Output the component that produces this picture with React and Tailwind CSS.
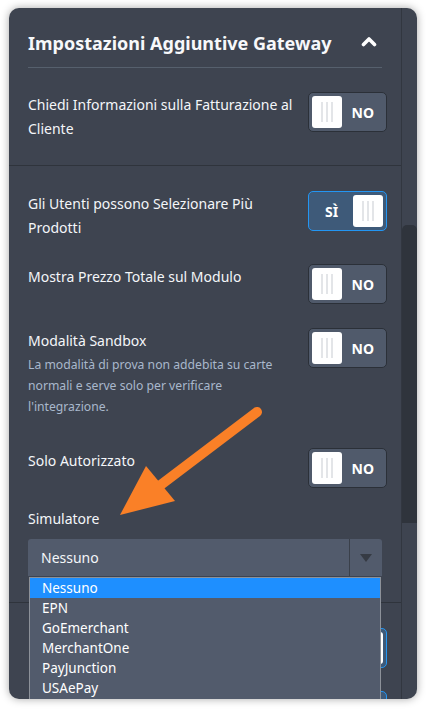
import React from 'react';

const Stripes = () => (
  <div className="flex gap-[3px]">
    <span className="w-[2px] h-[20px] bg-[#e3e5e8]" />
    <span className="w-[2px] h-[20px] bg-[#e3e5e8]" />
    <span className="w-[2px] h-[20px] bg-[#e3e5e8]" />
  </div>
);

const Toggle = ({ on }) => {
  if (on) {
    return (
      <div className="flex items-center justify-between w-[79px] h-[40px] shrink-0 rounded-[5px] border border-[#2396f3] bg-[#3e5a79] pl-[16px] pr-[3px]">
        <span className="text-[14px] font-bold text-white">SÌ</span>
        <div className="w-[30px] h-[32px] rounded-[3px] bg-white flex items-center justify-center">
          <Stripes />
        </div>
      </div>
    );
  }
  return (
    <div className="flex items-center w-[79px] h-[40px] shrink-0 rounded-[5px] border border-[#2b3038] bg-[#505a6b] pl-[3px] pr-[12px]">
      <div className="w-[30px] h-[32px] rounded-[3px] bg-white flex items-center justify-center">
        <Stripes />
      </div>
      <span className="ml-auto text-[14px] font-bold text-white">NO</span>
    </div>
  );
};

const Row = ({ label, desc, on, className }) => (
  <div className={`flex items-start justify-between gap-3 ${className || ''}`}>
    <div className="flex-1 pt-[1px]">
      <div className="text-[14px] leading-[24px] text-[#f4f6f9]">{label}</div>
      {desc && (
        <div className="text-[12.2px] leading-[21px] text-[#a9b8cc] mt-[1px] pr-[20px]">{desc}</div>
      )}
    </div>
    <Toggle on={on} />
  </div>
);

const options = ['Nessuno', 'EPN', 'GoEmerchant', 'MerchantOne', 'PayJunction', 'USAePay'];

export default function App() {
  return (
    <div
      className="relative w-[426px] h-[709px] bg-white pt-[8px] px-[9px]"
      style={{ fontFamily: '"Noto Sans", "Open Sans", sans-serif' }}
    >
      <div className="relative flex h-[691px] rounded-[10px] bg-[#3e4450] overflow-hidden shadow-[0_0_8px_rgba(0,0,0,0.35)]">
        {/* content */}
        <div className="relative flex-1 min-w-0">
          {/* header */}
          <div className="mx-[19px] pt-[22px] pb-[11px] border-b border-[#56606d] flex items-center justify-between">
            <h2 className="text-[18px] leading-[26px] font-bold text-[#f7f8fa]">Impostazioni Aggiuntive Gateway</h2>
            <svg width="16" height="12" viewBox="0 0 16 12" className="mr-[5px] mt-[-4px]">
              <polyline points="2.5,9.5 8,4 13.5,9.5" fill="none" stroke="#fff" strokeWidth="3.6" strokeLinecap="round" strokeLinejoin="round" />
            </svg>
          </div>

          <div className="pl-[19px] pr-[14px] pt-[24px] pb-[24px] border-b border-[#2f343c]">
            <Row label="Chiedi Informazioni sulla Fatturazione al Cliente" on={false} />
          </div>

          <div className="pl-[19px] pr-[14px] pt-[25px]">
            <Row label="Gli Utenti possono Selezionare Più Prodotti" on />
            <Row className="mt-[24px]" label="Mostra Prezzo Totale sul Modulo" on={false} />
            <Row
              className="mt-[24px]"
              label="Modalità Sandbox"
              desc="La modalità di prova non addebita su carte normali e serve solo per verificare l'integrazione."
              on={false}
            />
            <Row className="mt-[31px]" label="Solo Autorizzato" on={false} />

            <div className="mt-[19px] text-[14px] leading-[24px] text-[#f4f6f9]">Simulatore</div>
            <div className="relative mt-[8px] mr-[5px]">
              <div className="flex h-[37px] rounded-t-[3px] bg-[#525b6c]">
                <div className="flex-1 flex items-center pl-[13px] text-[14px] text-[#f4f6f9]">Nessuno</div>
                <div className="w-[33px] border-l border-[#3a404a] flex items-center justify-center">
                  <svg width="12" height="8" viewBox="0 0 12 8">
                    <polygon points="0,0 12,0 6,8" fill="#363b44" />
                  </svg>
                </div>
              </div>
            </div>
          </div>

          {/* content partly hidden under the dropdown */}
          <div className="mt-[26px] border-t border-[#2f343c] pl-[19px] pr-[14px] pt-[25px]">
            <div className="flex justify-end">
              <Toggle on />
            </div>
            <div className="flex justify-end mt-[23px]">
              <div className="w-[79px] h-[40px] rounded-[5px] border border-[#2396f3] bg-[#3e5a79]" />
            </div>
          </div>

          {/* open dropdown list */}
          <div className="absolute left-[20px] top-[569px] w-[352px] border border-[#8c9199] bg-[#525b6c]">
            {options.map((o, i) => (
              <div
                key={o}
                className={`h-[20px] pl-[12px] flex items-center text-[13.5px] text-white ${i === 0 ? 'bg-[#1e8fff]' : ''}`}
              >
                {o}
              </div>
            ))}
            <div className="h-[2px]" />
          </div>
        </div>

        {/* scrollbar */}
        <div className="w-[16px] shrink-0 border-l border-[#323740] relative">
          <div className="absolute left-0 right-0 top-[217px] h-[298px] rounded-t-[5px] bg-[#2f343c]" />
        </div>
      </div>

      {/* annotation arrow */}
      <svg className="absolute left-0 top-0 pointer-events-none" width="426" height="709">
        <line x1="257" y1="412" x2="158" y2="487" stroke="#fa8027" strokeWidth="10" strokeLinecap="round" />
        <polygon points="120,515 146,466 175,501" fill="#fa8027" />
      </svg>
    </div>
  );
}
